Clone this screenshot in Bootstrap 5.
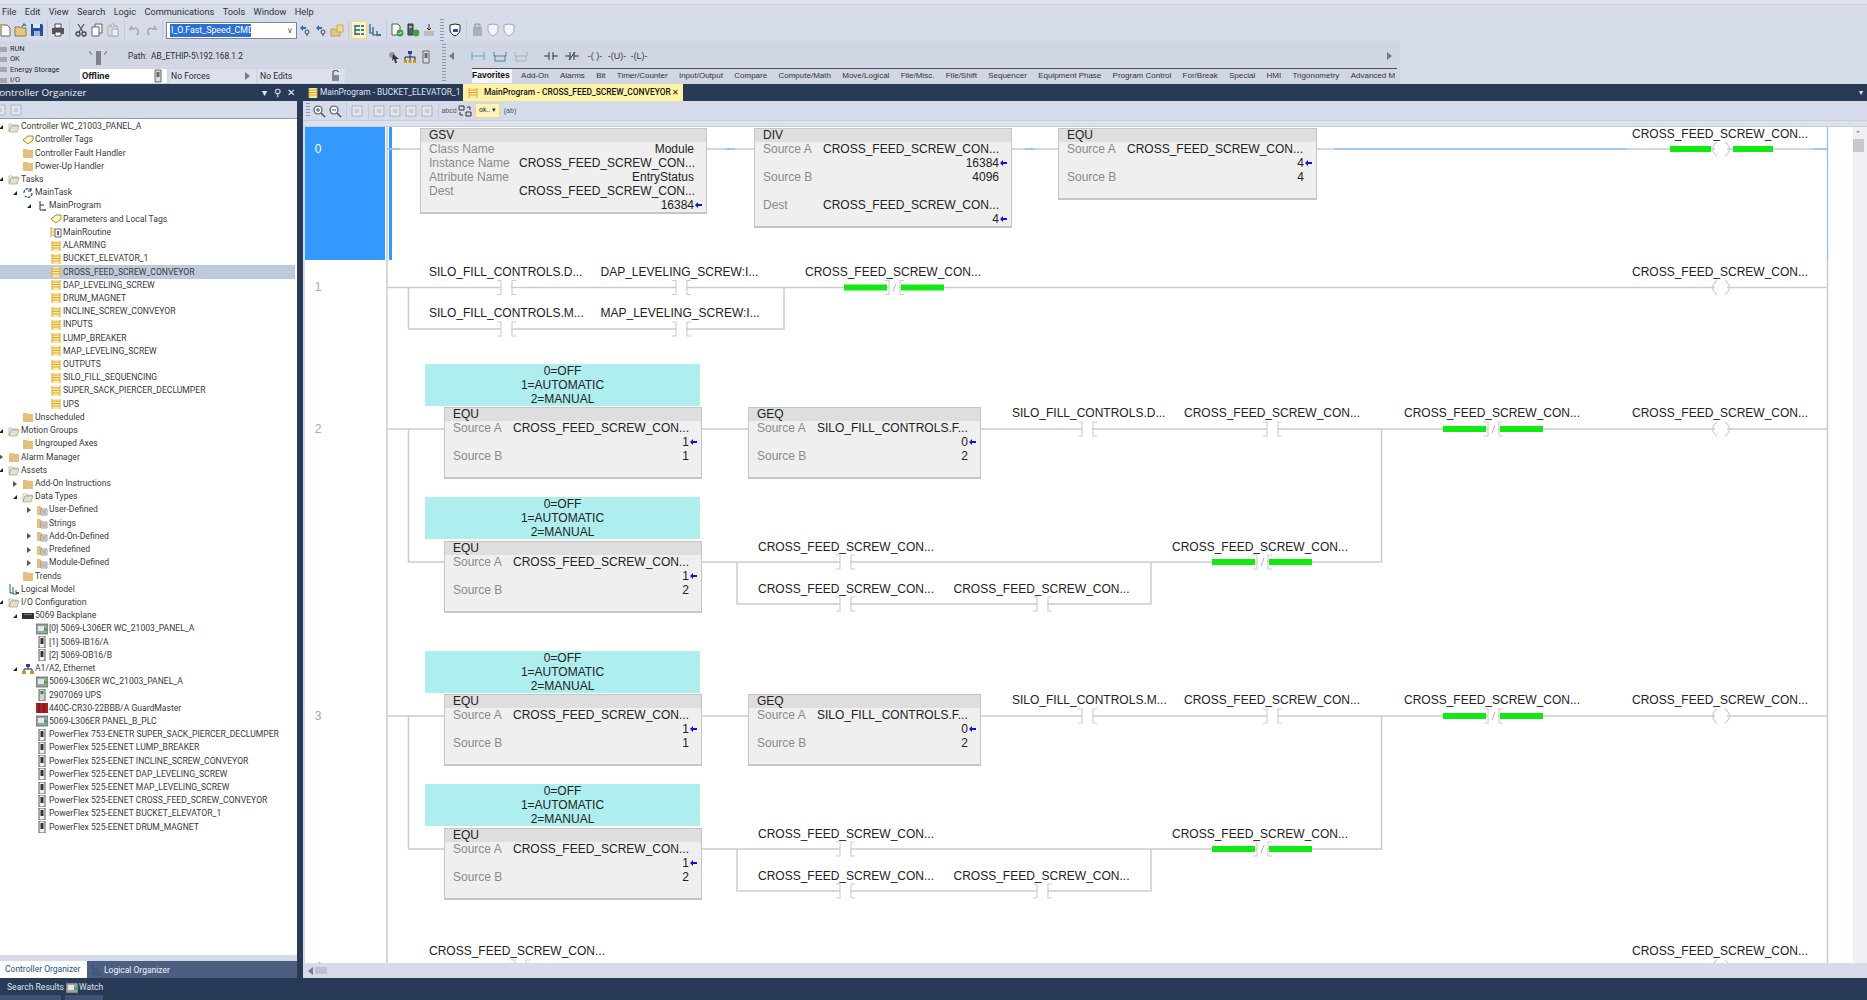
<!DOCTYPE html>
<html lang="en">
<head>
<meta charset="UTF-8">
<title>Logix Designer</title>
<link href="https://cdn.jsdelivr.net/npm/bootstrap@5.3.0/dist/css/bootstrap.min.css" rel="stylesheet">
<style>
  html, body { height: 100%; }
  body { background: #d6dbe9; color: #2b2b2b; font: 9px/1.2 Roboto, sans-serif; overflow: hidden; width: 1867px; height: 1000px; }
  svg.ic { width: 14px; height: 14px; display: block; flex: none; }

  /* top of the window */
  .menu-strip { height: 19px; padding-top: 4px; padding-left: 2px; gap: 8.4px; background: linear-gradient(#dfe3ee 4px, #c9cfdf 4px, #c9cfdf 5px, #d6dbe9 5px); font-size: 9.2px; color: #333; line-height: 15px; }
  .tool-strip { height: 22px; padding-left: 0; margin-left: -3px; }
  .tb { width: 16px; height: 18px; display: flex; align-items: center; justify-content: center; flex: none; }
  .tb.on { background: #fdf3c0; outline: 1px solid #ecd98a; outline-offset: -1px; }
  .tsep { flex: none; display: flex; justify-content: center; align-self: stretch; margin: 2px 0; }
  .tsep::after { content: ""; width: 1px; background: #c3c9da; }
  .w5 { width: 5px; } .w6 { width: 6px; } .w7 { width: 7px; }
  .grip { flex: none; width: 4px; align-self: stretch; background: repeating-linear-gradient(#8e95a8 0 1px, transparent 1px 3px); margin: 0 3px; }
  .combo { width: 131px; height: 17px; background: #fff; border: 1px solid #7d8496; flex: none; padding: 1px 3px; font-size: 8.8px; line-height: 13px; color: #fff; }
  .combo b { font-weight: 400; background: #2c6fd6; padding: 0 1px; display: inline-block; width: 81px; white-space: nowrap; }
  .combo i { font-style: normal; color: #555; font-size: 8px; }

  .status-strip { height: 43px; }
  .status-left { width: 442px; flex: none; background: #d1d6e5; }
  .lamps { width: 80px; flex: none; padding-top: 3px; font-size: 7.4px; }
  .lamp-row { height: 10.4px; line-height: 10.4px; gap: 3px; white-space: nowrap; }
  .lamp-row::before { content: ""; width: 7px; height: 5px; background: #a2a6b0; flex: none; }
  .lamp-top { height: 28px; padding-top: 3px; }
  .keysw { width: 20px; height: 14px; margin: 3px 20px 0 8px; flex: none; position: relative; }
  .keysw span { display: block; width: 5px; height: 14px; background: #7f8288; margin: 0 auto; }
  .keysw::before, .keysw::after { content: ""; position: absolute; top: 0; width: 1px; height: 4px; background: #777; }
  .keysw::before { left: 2px; transform: rotate(-35deg); }
  .keysw::after { right: 2px; transform: rotate(35deg); }
  .path-txt { font-size: 8.3px; flex: 1; }
  .mode-box { width: 87px; height: 14px; margin-right: 2px; padding: 0 2px; line-height: 14px; background: #dce0ec; font-size: 8.6px; flex: none; }
  .mode-box.now { background: #fff; font-size: 9.2px; font-weight: 700; color: #222; }
  .ladder-tools { width: 958px; flex: none; background: #d1d6e5; }
  .ladder-top { height: 27px; padding-top: 3px; }
  .ladder-tools .grip { margin: 0 3px 0 0; }
  .lt { color: #3c3c3c; font: 9px "Liberation Sans", sans-serif; width: 22px; text-align: center; flex: none; }
  .ladder-tabs { height: 15px; gap: 11.3px; border-top: 1px solid #4a4f5c; margin-left: 23px; margin-right: 3px; font: 8px/13px "Liberation Sans", sans-serif; color: #333; white-space: nowrap; overflow: hidden; }
  .ladder-tabs .now { background: #f3f4f8; font-size: 8.5px; font-weight: 700; color: #111; padding: 0 2px; margin: -1px -2px 0; line-height: 15px; }
  .nav-arrow { width: 0; height: 0; border: 4px solid transparent; flex: none; }
  .nav-l { border-right: 5px solid #767b88; border-left: 0; }
  .nav-r { border-left: 5px solid #767b88; border-right: 0; }

  /* organizer on the left */
  .work { height: 894px; }
  .organizer { width: 297px; flex: none; }
  .pane-head { height: 17px; background: #293a56; color: #eef1f6; font: 9.8px/17px "Open Sans", sans-serif; white-space: nowrap; overflow: hidden; }
  .pane-tools { height: 18px; background: #d6dbe9; border-bottom: 1px solid #8f96a8; }
  .org-tree { flex: 1; background: #fff; overflow: hidden; padding-top: 1px; }
  .tree-row { height: 13.23px; line-height: 13px; white-space: nowrap; color: #3a3a3a; font-size: 8.6px; }
  .tree-row.sel { background: #bccadb; margin-right: 2px; }
  .lv0 { padding-left: 0; } .lv1 { padding-left: 14px; } .lv2 { padding-left: 28px; } .lv3 { padding-left: 42px; }
  .twist { width: 8px; margin-left: -3px; flex: none; display: flex; justify-content: center; margin-right: 3px; }
  .twist.open::after { content: ""; border: 2.5px solid transparent; border-right-color: #222; border-bottom-color: #222; }
  .twist.shut::after { content: ""; border: 3px solid transparent; border-left: 4px solid #555; border-right: 0; }
  .tree-ic { width: 12px; height: 12px; margin-right: 1px; flex: none; }
  .pane-foot { height: 6px; background: #d6dbe9; }
  .org-tabs { height: 17px; background: #4c5f80; color: #eef1f6; line-height: 16px; font-size: 8.5px; white-space: nowrap; }
  .org-tab-now { width: 87px; background: #fff; color: #24527e; padding-left: 5px; }

  .splitter { width: 6px; background: #293a56; flex: none; }

  /* document area */
  .doc { flex: 1; min-width: 0; }
  .doc-tabs { height: 17px; background: #293a56; color: #dfe4ee; font-size: 8.4px; line-height: 17px; white-space: nowrap; }
  .doc-tab { padding-left: 4px; width: 155px; }
  .doc-tab-now { width: 220px; background: #fdf3a5; color: #111; font-weight: 500; padding: 0 4px; margin-left: 5px; }
  .doc-tools { height: 19px; padding-left: 2px; background: #d6dbe9; }
  .doc-tools .grip { margin: 2px 1px 2px 1px; }
  .mini-sel { width: 25px; height: 15px; background: #fdf3c0; outline: 1px solid #ecd98a; outline-offset: -1px; font-size: 7px; line-height: 15px; text-align: center; margin: 0 2px; flex: none; }
  .mini-txt { font: 7px "Liberation Sans", sans-serif; color: #555; flex: none; width: 16px; text-align: center; }
  .doc-gap { height: 7px; border-top: 1px solid #c8cddc; border-bottom: 1px solid #c8cddc; background: #dde1ec; }
  .rung-view { position: relative; flex: 1; background: #fff; overflow: hidden; margin-left: 2px; font: 12px/14px "Liberation Sans", sans-serif; color: #222; }
  .wires { position: absolute; left: 0; top: 0; width: 1562px; height: 836px; }
  .tag-txt, .rung-no, .fb, .rem { position: absolute; }
  .tag-txt { white-space: nowrap; }
  .rung-no { width: 20px; text-align: center; color: #a9a9a9; }
  .rung-no.now { color: #fff; }
  .rung-sel { position: absolute; left: 0; top: 0; width: 80px; height: 133px; background: #3399ff; }
  .fb { background: #efefef; border: 1px solid #c6c6c6; border-bottom-width: 2px; }
  .fb-head { height: 13px; background: #dedede; padding-left: 8px; line-height: 13px; }
  .fb-row { height: 14px; padding-left: 8px; white-space: nowrap; }
  .fb-lab { color: #8b8b8b; flex: none; }
  .fb-num { flex: 1; text-align: right; }
  .fb-arr { width: 12px; flex: none; display: flex; align-items: center; padding-left: 1px; }
  .rem { width: 275px; height: 42px; background: #afeeee; text-align: center; }
  .v-scroll { position: absolute; right: 0; top: 0; bottom: 0; width: 14px; background: #eef0f4; }
  .v-thumb { position: absolute; left: 0; top: 12px; width: 11px; height: 13px; background: #c8c8c8; }
  .v-up { position: absolute; left: 2px; top: 3px; width: 7px; height: 7px; color: #444; font-size: 7px; line-height: 7px; }
  .h-scroll { height: 15px; background: #d6dbe9; padding-left: 5px; gap: 2px; }
  .h-thumb { width: 12px; height: 7px; background: #bcc2d1; }

  .foot-bar { height: 22px; background: #293a56; color: #dfe4ee; font-size: 8.6px; line-height: 18px; white-space: nowrap; position: relative; }
  .foot-tab { height: 22px; border-bottom: 5px solid #3f5374; flex: none; }
</style>
</head>
<body>
<svg width="0" height="0" class="position-absolute">
  <symbol id="i-new" viewBox="0 0 14 14"><path d="M3 2h6l3 3v8H3z" fill="#fff" stroke="#666"/><path d="M2 1l2 2M1 4h3" stroke="#e1a72e" stroke-width="1.5"/></symbol>
  <symbol id="i-open" viewBox="0 0 14 14"><path d="M1 4h5l1 1h5v8H1z" fill="#e8c67d" stroke="#8a7a50"/><path d="M8 4l2-3 2 2" fill="none" stroke="#2c6fb5" stroke-width="1.3"/></symbol>
  <symbol id="i-save" viewBox="0 0 14 14"><path d="M1 1h11l1 1v11H1z" fill="#23509e"/><path d="M3 1h7v4H3z" fill="#dfe7f5"/><path d="M4 8h6v5H4z" fill="#9db5da"/></symbol>
  <symbol id="i-print" viewBox="0 0 14 14"><path d="M4 1h6v4H4z" fill="#fff" stroke="#444"/><path d="M1 5h12v6H1z" fill="#555"/><path d="M4 9h6v4H4z" fill="#fff" stroke="#444"/></symbol>
  <symbol id="i-cut" viewBox="0 0 14 14"><path d="M4 1l5 8M10 1L5 9" stroke="#555" stroke-width="1.2"/><circle cx="4" cy="11" r="2" fill="none" stroke="#444" stroke-width="1.3"/><circle cx="10" cy="11" r="2" fill="none" stroke="#444" stroke-width="1.3"/></symbol>
  <symbol id="i-copy" viewBox="0 0 14 14"><path d="M5 1h7v9H5z" fill="#eee" stroke="#666"/><path d="M2 4h7v9H2z" fill="#fff" stroke="#666"/></symbol>
  <symbol id="i-paste" viewBox="0 0 14 14"><path d="M2 3h9v10H2z" fill="none" stroke="#aaa"/><path d="M5 1h3v3H5zM6 6h6v7H6z" fill="#eee" stroke="#aaa"/></symbol>
  <symbol id="i-undo" viewBox="0 0 14 14"><path d="M4 3l-2 3h3c4-2 7 1 4 6" fill="none" stroke="#a5a5a5" stroke-width="1.5"/></symbol>
  <symbol id="i-redo" viewBox="0 0 14 14"><path d="M10 3l2 3H9C5 4 2 7 5 12" fill="none" stroke="#a5a5a5" stroke-width="1.5"/></symbol>
  <symbol id="i-find" viewBox="0 0 14 14"><path d="M2 5l3-3v2h3v2H5v2z" fill="#2c6fb5"/><circle cx="9" cy="9" r="2" fill="none" stroke="#444"/><path d="M9 11v2" stroke="#444"/></symbol>
  <symbol id="i-findf" viewBox="0 0 14 14"><path d="M1 6h4l1 1h4v6H1z" fill="#e8c67d" stroke="#b9a267"/><path d="M7 2h6v7H7z" fill="#f5d98d" stroke="#c5a85a"/></symbol>
  <symbol id="i-tree" viewBox="0 0 14 14"><path d="M3 2v10M3 3h5M3 7h5M3 11h5" stroke="#1b5a8a" stroke-width="1.3" fill="none"/><path d="M9 2h3v2H9zM9 6h3v2H9zM9 10h3v2H9z" fill="#2a8a9a"/></symbol>
  <symbol id="i-logic" viewBox="0 0 14 14"><path d="M2 1v9l3 0M5 4v8h4M9 8v4h3" stroke="#235a82" fill="none" stroke-width="1.2"/><path d="M8 11h5v2H8z" fill="#3a8a4a"/></symbol>
  <symbol id="i-verify" viewBox="0 0 14 14"><path d="M2 1h6l2 2v9H2z" fill="#fff" stroke="#555"/><circle cx="10" cy="10" r="3.4" fill="#3da33d"/><path d="M8.5 10l1 1 2-2" stroke="#fff" fill="none"/></symbol>
  <symbol id="i-verify2" viewBox="0 0 14 14"><path d="M2 1h5v11H2z" fill="#55606a" stroke="#333"/><path d="M3 3h3v2H3z" fill="#7c7"/><circle cx="10" cy="10" r="3.4" fill="#3da33d"/></symbol>
  <symbol id="i-down" viewBox="0 0 14 14"><path d="M7 1v6M5 5l2 2 2-2" stroke="#333" fill="none"/><path d="M2 8h10v5H2z" fill="#9b9b9b"/><path d="M3 8v5M5 8v5M7 8v5M9 8v5M11 8v5" stroke="#ddd"/></symbol>
  <symbol id="i-shield" viewBox="0 0 14 14"><path d="M2 2l5-1 5 1v5c0 3-3 5-5 6-2-1-5-3-5-6z" fill="#fff" stroke="#223"/><path d="M5 6h5v3H5z" fill="#24509e"/></symbol>
  <symbol id="i-shield2" viewBox="0 0 14 14"><path d="M2 2l5-1 5 1v5c0 3-3 5-5 6-2-1-5-3-5-6z" fill="#f3f4f7" stroke="#a5a8b0"/></symbol>
  <symbol id="i-drum" viewBox="0 0 14 14"><path d="M3 4h9v9H3z" fill="#aeb1b9"/><path d="M5 1h5v4H5z" fill="#c8cad0" stroke="#999"/></symbol>
  <symbol id="i-cursor" viewBox="0 0 14 14"><circle cx="5" cy="5" r="3" fill="#999"/><path d="M6 4l6 5-3 0 1 4-2 0-1-4-2 2z" fill="#333"/></symbol>
  <symbol id="i-net" viewBox="0 0 14 14"><path d="M5 1h4v3H5z" fill="#2a41a6"/><path d="M7 4v3M2 10V7h10v3M7 7v3" stroke="#222" fill="none"/><path d="M1 10h3v3H1zM5.500 10h3v3h-3zM10 10h3v3h-3z" fill="#c89a1c"/></symbol>
  <symbol id="i-mod" viewBox="0 0 14 14"><path d="M4 1h6v12H4z" fill="#dcdcdc" stroke="#666"/><path d="M5.500 3h3v5h-3z" fill="#666"/></symbol>
  <symbol id="i-lock" viewBox="0 0 14 14"><path d="M4 6V3c0-2 5-2 5 0" fill="none" stroke="#555" stroke-width="1.2"/><path d="M3 6h7v6H3z" fill="#888"/></symbol>
  <symbol id="i-h1" viewBox="0 0 14 14"><path d="M1 3v8M13 3v8M1 7h12" stroke="#55abd0" fill="none"/></symbol>
  <symbol id="i-h2" viewBox="0 0 14 14"><path d="M1 3v4h12V3M2 7v5h10V7" stroke="#4d7f96" fill="none"/></symbol>
  <symbol id="i-h3" viewBox="0 0 14 14"><path d="M1 3v4h12V3M2 7v5h10V7" stroke="#aab0bc" fill="none"/></symbol>
  <symbol id="i-xic" viewBox="0 0 14 14"><path d="M0 7h5M5 3v8M9 3v8M9 7h5" stroke="#333" fill="none"/></symbol>
  <symbol id="i-xio" viewBox="0 0 14 14"><path d="M0 7h5M5 3v8M9 3v8M9 7h5M4 11l6-8" stroke="#333" fill="none"/></symbol>
  <symbol id="i-zin" viewBox="0 0 14 14"><circle cx="6" cy="6" r="4" fill="#fff" stroke="#555" stroke-width="1.2"/><path d="M4 6h4M6 4v4" stroke="#23509e"/><path d="M9 9l4 4" stroke="#555" stroke-width="1.6"/></symbol>
  <symbol id="i-zout" viewBox="0 0 14 14"><circle cx="6" cy="6" r="4" fill="#fff" stroke="#555" stroke-width="1.2"/><path d="M4 6h4" stroke="#23509e"/><path d="M9 9l4 4" stroke="#555" stroke-width="1.6"/></symbol>
  <symbol id="i-faint" viewBox="0 0 14 14"><path d="M2 2h10v10H2z" fill="#e4e6ee" stroke="#b0b4c0"/><path d="M5 5h4v4H5z" fill="#c8ccd6"/></symbol>
  <symbol id="i-swap" viewBox="0 0 14 14"><path d="M1 2h5v4H1z" fill="none" stroke="#333"/><path d="M8 8h5v4H8zM9 3h3v3M5 11H2V8" fill="none" stroke="#333"/></symbol>

  <symbol id="t-folder" viewBox="0 0 12 12"><path d="M1 2h4l1 1h5v8H1z" fill="#e3c07c"/></symbol>
  <symbol id="t-open" viewBox="0 0 12 12"><path d="M1 3h3l1 1h5v1H3L1 10z" fill="#fff" stroke="#a9a08a" stroke-width=".7"/><path d="M3 5h8l-2 6H1z" fill="#e6dfcd" stroke="#a9a08a" stroke-width=".7"/></symbol>
  <symbol id="t-tag" viewBox="0 0 12 12"><path d="M1 6l5-4h5v4l-5 4z" fill="#fff6c9" stroke="#a28a2f"/></symbol>
  <symbol id="t-ladder" viewBox="0 0 12 12"><path d="M2 1h8v10H2z" fill="#fde9a6"/><path d="M2 1v10M10 1v10M2 3h8M2 5.500h8M2 8h8" stroke="#deaa35" fill="none"/></symbol>
  <symbol id="t-main" viewBox="0 0 12 12"><path d="M1 1v10M1 3h4M1 6h4M1 9h4" stroke="#deaa35" fill="none"/><path d="M5 3h6v8H5z" fill="#fff" stroke="#666"/><path d="M7 5h2v4H7z" fill="#567"/></symbol>
  <symbol id="t-task" viewBox="0 0 12 12"><path d="M2 6a4 4 0 0 1 7-3M10 6a4 4 0 0 1-7 3" fill="none" stroke="#1f5aa0" stroke-width="1.300" stroke-dasharray="3 1"/><path d="M9 1v3H6" fill="none" stroke="#2c2c2c"/></symbol>
  <symbol id="t-prog" viewBox="0 0 12 12"><path d="M4 1v9h4M4 5h4" stroke="#333" fill="none"/><path d="M7 9h3v2H7z" fill="#3a9a4a"/></symbol>
  <symbol id="t-type" viewBox="0 0 12 12"><path d="M1 2h3l1 1h1v8H1z" fill="#e3c07c"/><path d="M5 5h6v6H5z" fill="#f2f2f2" stroke="#777" stroke-width=".7"/><path d="M6 7h4M6 9h4" stroke="#555" stroke-width=".7"/></symbol>
  <symbol id="t-logical" viewBox="0 0 12 12"><path d="M2 1v9h3M5 4v7h4M8 7v3" stroke="#235a82" fill="none"/><path d="M8 9h3v2H8z" fill="#456"/></symbol>
  <symbol id="t-back" viewBox="0 0 12 12"><path d="M0 3h12v6H0z" fill="#333"/><path d="M2 4h8v1H2z" fill="#777"/></symbol>
  <symbol id="t-plc" viewBox="0 0 12 12"><path d="M0 1h12v10H0z" fill="#9aa3a3" stroke="#555" stroke-width=".7"/><path d="M2 3h6v5H2z" fill="#e3e7e7"/><path d="M8 5h3v3H8z" fill="#4aa84a"/></symbol>
  <symbol id="t-mod" viewBox="0 0 12 12"><path d="M3 0h6v12H3z" fill="#f1f1f1" stroke="#333" stroke-width=".8"/><path d="M4.500 2h3v6h-3z" fill="#333"/></symbol>
  <symbol id="t-ups" viewBox="0 0 12 12"><path d="M3 0h6v12H3z" fill="#cfd4cf" stroke="#444" stroke-width=".8"/><path d="M4.500 2h3v3h-3z" fill="#3a8a4a"/></symbol>
  <symbol id="t-guard" viewBox="0 0 12 12"><path d="M0 1h12v10H0z" fill="#c01818"/><path d="M3 1v10M8 1v10" stroke="#333" stroke-width="1.300"/></symbol>
  <symbol id="t-net" viewBox="0 0 12 12"><path d="M4 1h4v3H4z" fill="#2a41a6"/><path d="M6 4v2M2 8V6h8v2" stroke="#222" fill="none"/><path d="M0 8h4v3H0zM8 8h4v3H8z" fill="#c89a1c"/></symbol>
</svg>

<div class="d-flex flex-column" style="height:1000px">
  <div class="menu-strip d-flex"><span>File</span><span>Edit</span><span>View</span><span>Search</span><span>Logic</span><span>Communications</span><span>Tools</span><span>Window</span><span>Help</span></div>

  <div class="tool-strip d-flex align-items-center" id="mainTools"></div>

  <div class="status-strip d-flex">
    <div class="status-left d-flex">
      <div class="lamps">
        <div class="lamp-row d-flex align-items-center">RUN</div>
        <div class="lamp-row d-flex align-items-center">OK</div>
        <div class="lamp-row d-flex align-items-center">Energy Storage</div>
        <div class="lamp-row d-flex align-items-center">I/O</div>
      </div>
      <div class="flex-grow-1 d-flex flex-column">
        <div class="lamp-top d-flex align-items-center">
          <div class="keysw"><span></span></div>
          <div class="path-txt">Path:&nbsp; AB_ETHIP-5\192.168.1.2</div>
          <div class="tb"><svg class="ic"><use href="#i-cursor"/></svg></div>
          <div class="tb"><svg class="ic"><use href="#i-net"/></svg></div>
          <div class="tb me-2"><svg class="ic"><use href="#i-mod"/></svg></div>
        </div>
        <div class="d-flex">
          <div class="mode-box now d-flex justify-content-between align-items-center">Offline<svg class="ic"><use href="#i-mod"/></svg></div>
          <div class="mode-box d-flex justify-content-between align-items-center">No Forces<span class="nav-arrow nav-r me-1"></span></div>
          <div class="mode-box d-flex justify-content-between align-items-center">No Edits<svg class="ic"><use href="#i-lock"/></svg></div>
        </div>
      </div>
    </div>
    <div class="ladder-tools d-flex flex-column position-relative">
      <div class="ladder-top d-flex align-items-center">
        <span class="grip"></span>
        <span class="nav-arrow nav-l"></span>
        <div class="tb" style="margin-left:16px"><svg class="ic"><use href="#i-h1"/></svg></div>
        <div class="tb" style="margin-left:6px"><svg class="ic"><use href="#i-h2"/></svg></div>
        <div class="tb" style="margin-left:5px"><svg class="ic"><use href="#i-h3"/></svg></div>
        <div class="tb" style="margin-left:14px"><svg class="ic"><use href="#i-xic"/></svg></div>
        <div class="tb" style="margin-left:5px"><svg class="ic"><use href="#i-xio"/></svg></div>
        <span class="lt ms-1">-( )-</span><span class="lt">-(U)-</span><span class="lt">-(L)-</span>
        <span class="nav-arrow nav-r ms-auto me-2"></span>
      </div>
      <div class="d-flex align-items-start">
        <span class="grip" style="height:15px"></span>
        <div class="ladder-tabs d-flex flex-grow-1"><span class="now">Favorites</span><span>Add-On</span><span>Alarms</span><span>Bit</span><span>Timer/Counter</span><span>Input/Output</span><span>Compare</span><span>Compute/Math</span><span>Move/Logical</span><span>File/Misc.</span><span>File/Shift</span><span>Sequencer</span><span>Equipment Phase</span><span>Program Control</span><span>For/Break</span><span>Special</span><span>HMI</span><span>Trigonometry</span><span>Advanced M</span></div>
      </div>
    </div>
    <div class="flex-grow-1"></div>
  </div>

  <div class="work d-flex">
    <div class="organizer d-flex flex-column">
      <div class="pane-head d-flex align-items-center">
        <span class="flex-grow-1" style="margin-left:-7px">Controller Organizer</span>
        <span style="margin-right:7px">&#9662;</span><span style="margin-right:6px">&#9906;</span><span style="margin-right:2px">&#10005;</span>
      </div>
      <div class="pane-tools d-flex align-items-center" style="margin-left:-8px"><div class="tb"><svg class="ic"><use href="#i-faint"/></svg></div><div class="tb"><svg class="ic"><use href="#i-faint"/></svg></div></div>
      <div class="org-tree" id="orgTree"></div>
      <div class="pane-foot"></div>
      <div class="org-tabs d-flex">
        <div class="org-tab-now">Controller Organizer</div>
        <div class="d-flex align-items-center ms-1"><svg class="tree-ic"><use href="#t-logical"/></svg>Logical Organizer</div>
      </div>
    </div>
    <div class="splitter"></div>
    <div class="doc d-flex flex-column">
      <div class="doc-tabs d-flex">
        <div class="doc-tab d-flex align-items-center"><svg class="tree-ic"><use href="#t-ladder"/></svg>MainProgram - BUCKET_ELEVATOR_1</div>
        <div class="doc-tab-now d-flex align-items-center"><svg class="tree-ic"><use href="#t-ladder"/></svg><span class="flex-grow-1 ms-1">MainProgram - CROSS_FEED_SCREW_CONVEYOR</span><span>&#10005;</span></div>
        <span class="ms-auto me-1">&#9662;</span>
      </div>
      <div class="doc-tools d-flex align-items-center" id="docTools"></div>
      <div class="doc-gap"></div>
      <div class="rung-view" id="rungs"></div>
      <div class="h-scroll d-flex align-items-center"><span class="nav-arrow nav-l"></span><span class="h-thumb"></span></div>
    </div>
  </div>

  <div class="foot-bar d-flex">
    <div class="foot-tab" style="width:62px;margin-left:-1px;padding-left:8px">Search Results</div>
    <div class="foot-tab d-flex ms-1" style="width:38px;padding-left:1px"><svg class="tree-ic mt-1"><use href="#t-plc"/></svg><span>Watch</span></div>
  </div>
</div>

<script src="https://cdn.jsdelivr.net/npm/bootstrap@5.3.0/dist/js/bootstrap.bundle.min.js"></script>
<script>
  // toolbars: ic:name, s:separator width
  function toolbar(el, items) {
    el.innerHTML = items.map(function (t) {
      if (t[0] === '|') return '<span class="tsep w' + t[1] + '"></span>';
      if (t === 'grip') return '<span class="grip"></span>';
      if (t === 'combo') return '<div class="combo d-flex justify-content-between"><b>I_O.Fast_Speed_CMD</b><i>&#8744;</i></div>';
      if (t === 'sel') return '<div class="mini-sel">ok.. &#9662;</div>';
      if (t[0] === '~') return '<span class="mini-txt">' + t.slice(1) + '</span>';
      var on = t[0] === '*';
      return '<div class="tb' + (on ? ' on' : '') + '"><svg class="ic"><use href="#i-' + t.replace('*', '') + '"/></svg></div>';
    }).join('');
  }
  toolbar(document.getElementById('mainTools'), ['new', 'open', 'save', '|5', 'print', '|7', 'cut', 'copy', 'paste', '|6', 'undo', 'redo', '|7', 'combo',
    'find', 'find', 'findf', '|6', '*tree', 'logic', '|6', 'verify', 'verify2', 'down', 'grip', 'shield', '|6', 'drum', 'shield2', 'shield2']);
  toolbar(document.getElementById('docTools'), ['grip', 'zin', 'zout', '|6', 'faint', '|6', 'faint', 'faint', 'faint', 'faint', '|6', '~abcd', 'swap', 'sel', '~(ab)']);

  // controller organizer tree: level, twist, icon, text
  var routines = ['ALARMING', 'BUCKET_ELEVATOR_1', 'CROSS_FEED_SCREW_CONVEYOR', 'DAP_LEVELING_SCREW', 'DRUM_MAGNET', 'INCLINE_SCREW_CONVEYOR', 'INPUTS', 'LUMP_BREAKER', 'MAP_LEVELING_SCREW', 'OUTPUTS', 'SILO_FILL_SEQUENCING', 'SUPER_SACK_PIERCER_DECLUMPER', 'UPS'];
  var tree = [
    [0, 'open', 'open', 'Controller WC_21003_PANEL_A'],
    [1, '', 'tag', 'Controller Tags'],
    [1, '', 'folder', 'Controller Fault Handler'],
    [1, '', 'folder', 'Power-Up Handler'],
    [0, 'open', 'open', 'Tasks'],
    [1, 'open', 'task', 'MainTask'],
    [2, 'open', 'prog', 'MainProgram'],
    [3, '', 'tag', 'Parameters and Local Tags'],
    [3, '', 'main', 'MainRoutine']
  ].concat(routines.map(function (r) { return [3, '', 'ladder', r]; })).concat([
    [1, '', 'folder', 'Unscheduled'],
    [0, 'open', 'open', 'Motion Groups'],
    [1, '', 'folder', 'Ungrouped Axes'],
    [0, 'shut', 'folder', 'Alarm Manager'],
    [0, 'open', 'open', 'Assets'],
    [1, 'shut', 'folder', 'Add-On Instructions'],
    [1, 'open', 'open', 'Data Types'],
    [2, 'shut', 'type', 'User-Defined'],
    [2, '', 'type', 'Strings'],
    [2, 'shut', 'type', 'Add-On-Defined'],
    [2, 'shut', 'type', 'Predefined'],
    [2, 'shut', 'type', 'Module-Defined'],
    [1, '', 'folder', 'Trends'],
    [0, '', 'logical', 'Logical Model'],
    [0, 'open', 'open', 'I/O Configuration'],
    [1, 'open', 'back', '5069 Backplane'],
    [2, '', 'plc', '[0] 5069-L306ER WC_21003_PANEL_A'],
    [2, '', 'mod', '[1] 5069-IB16/A'],
    [2, '', 'mod', '[2] 5069-OB16/B'],
    [1, 'open', 'net', 'A1/A2, Ethernet'],
    [2, '', 'plc', '5069-L306ER WC_21003_PANEL_A'],
    [2, '', 'ups', '2907069 UPS'],
    [2, '', 'guard', '440C-CR30-22BBB/A GuardMaster'],
    [2, '', 'plc', '5069-L306ER PANEL_B_PLC'],
    [2, '', 'mod', 'PowerFlex 753-ENETR SUPER_SACK_PIERCER_DECLUMPER'],
    [2, '', 'mod', 'PowerFlex 525-EENET LUMP_BREAKER'],
    [2, '', 'mod', 'PowerFlex 525-EENET INCLINE_SCREW_CONVEYOR'],
    [2, '', 'mod', 'PowerFlex 525-EENET DAP_LEVELING_SCREW'],
    [2, '', 'mod', 'PowerFlex 525-EENET MAP_LEVELING_SCREW'],
    [2, '', 'mod', 'PowerFlex 525-EENET CROSS_FEED_SCREW_CONVEYOR'],
    [2, '', 'mod', 'PowerFlex 525-EENET BUCKET_ELEVATOR_1'],
    [2, '', 'mod', 'PowerFlex 525-EENET DRUM_MAGNET']
  ]);
  document.getElementById('orgTree').innerHTML = tree.map(function (t) {
    var sel = t[3] === 'CROSS_FEED_SCREW_CONVEYOR' ? ' sel' : '';
    return '<div class="tree-row d-flex align-items-center lv' + t[0] + sel + '"><span class="twist ' + t[1] + '"></span>' +
      '<svg class="tree-ic"><use href="#t-' + t[2] + '"/></svg><span>' + t[3] + '</span></div>';
  }).join('');

  // ladder: every coordinate below is in window pixels, the view starts at (305,127)
  var OX = 305, OY = 127, view = document.getElementById('rungs'), g = '', html = '';
  var CF = 'CROSS_FEED_SCREW_CON...';
  function wire(d, cls, w) { g += '<path d="' + d + '" fill="none" stroke="' + (cls || '#cbcbcb') + '" stroke-width="' + (w || 1.5) + '"/>'; }
  function tag(x, y, s) { html += '<div class="tag-txt" style="left:' + (x - OX) + 'px;top:' + (y - OY - 7) + 'px">' + s + '</div>'; }
  function xic(cx, y) {
    g += '<rect x="' + (cx - 5) + '" y="' + (y - 2) + '" width="10" height="4" fill="#fff"/>';
    wire('M' + (cx - 9) + ' ' + (y - 7) + 'h4v14h-4M' + (cx + 10) + ' ' + (y - 7) + 'h-4v14h4', '#cdcdcd', 1.1);
  }
  function greenBars(x1, x2, y) { g += '<rect x="' + x1 + '" y="' + (y - 3) + '" width="' + (x2 - x1) + '" height="6" fill="#12e812"/>'; }
  function xio(cx, y) {
    xic(cx, y);
    wire('M' + (cx - 1) + ' ' + (y + 4) + 'l3 -8', '#b5b5b5', 1);
    greenBars(cx - 50, cx - 7, y); greenBars(cx + 7, cx + 50, y);
  }
  function coil(cx, y, live) {
    g += '<rect x="' + (cx - 6) + '" y="' + (y - 2) + '" width="12" height="4" fill="#fff"/>';
    wire('M' + (cx - 4) + ' ' + (y - 7) + 'Q' + (cx - 13) + ' ' + y + ' ' + (cx - 4) + ' ' + (y + 7) + 'M' + (cx + 4) + ' ' + (y - 7) + 'Q' + (cx + 13) + ' ' + y + ' ' + (cx + 4) + ' ' + (y + 7), '#cdcdcd', 1.1);
    if (live) { greenBars(cx - 51, cx - 10, y); greenBars(cx + 12, cx + 52, y); }
  }
  var ARROW = '<svg width="8" height="6" viewBox="0 0 8 6"><path d="M0 3l3-3v2h4v2H3v2z" fill="#1010e0"/></svg>';
  function fb(x, y, w, name, valX, rows) {
    var h = '<div class="fb" style="left:' + (x - OX) + 'px;top:' + (y - OY) + 'px;width:' + w + 'px"><div class="fb-head">' + name + '</div>';
    rows.forEach(function (r) {
      h += '<div class="fb-row d-flex"><span class="fb-lab" style="width:' + valX + 'px">' + r[0] + '</span>';
      h += r[1] ? '<span>' + r[1] + '</span>' : '';
      h += '<span class="fb-num">' + (r[2] || '') + '</span><span class="fb-arr">' + (r[3] ? ARROW : '') + '</span></div>';
    });
    html += h + '</div>';
  }
  function rem(x, y) { html += '<div class="rem" style="left:' + (x - OX) + 'px;top:' + (y - OY) + 'px">0=OFF<br>1=AUTOMATIC<br>2=MANUAL</div>'; }
  function no(n, y) { html += '<div class="rung-no' + (n === 0 ? ' now' : '') + '" style="left:3px;top:' + (y - OY - 7) + 'px">' + n + '</div>'; }

  html += '<div class="rung-sel"></div>';
  // side rails
  wire('M387 127V963M1827.500 127V963');
  g += '<rect x="389" y="127" width="3" height="133" fill="#3399ff"/><rect x="1827" y="127" width="1" height="133" fill="#8cc4ee"/>';

  // rung 0
  no(0, 149);
  wire('M387 149H420M706 149H754M1011 149H1058M1316 149H1827');
  wire('M1334 149H1627M1813 149H1827M387 149H400M725 149H735M1025 149H1035', '#8cc4ee');
  fb(420, 128, 287, 'GSV', 90, [['Class Name', '', 'Module'], ['Instance Name', CF], ['Attribute Name', '', 'EntryStatus'], ['Dest', CF], ['', '', '16384', 1]]);
  fb(754, 128, 258, 'DIV', 60, [['Source A', CF], ['', '', '16384', 1], ['Source B', '', '4096'], ['', ''], ['Dest', CF], ['', '', '4', 1]]);
  fb(1058, 128, 259, 'EQU', 60, [['Source A', CF], ['', '', '4', 1], ['Source B', '', '4'], ['', '']]);
  tag(1632, 134, CF); coil(1721, 149, true);

  // rung 1
  no(1, 287);
  wire('M387 287.500H1827M408.500 287.500V329H784V287.500');
  tag(429, 272, 'SILO_FILL_CONTROLS.D...'); xic(506, 287.5);
  tag(600.5, 272, 'DAP_LEVELING_SCREW:I...'); xic(681, 287.5);
  tag(429, 313, 'SILO_FILL_CONTROLS.M...'); xic(506, 329);
  tag(600.5, 313, 'MAP_LEVELING_SCREW:I...'); xic(681, 329);
  tag(805, 272, CF); xio(894, 287.5);
  tag(1632, 272, CF); coil(1721, 287.5);

  // rungs 2 and 3 have the same shape
  function modeRung(n, d, c1) {
    no(n, 429 + d);
    wire('M387 ' + (429 + d) + 'H1827M408.500 ' + (429 + d) + 'V' + (562 + d) + 'H1381.500V' + (429 + d) + 'M737 ' + (562 + d) + 'V' + (604 + d) + 'H1151V' + (562 + d));
    rem(425, 364 + d);
    fb(444, 407 + d, 258, 'EQU', 60, [['Source A', CF], ['', '', '1', 1], ['Source B', '', '1'], ['', '']]);
    fb(748, 407 + d, 233, 'GEQ', 60, [['Source A', 'SILO_FILL_CONTROLS.F...'], ['', '', '0', 1], ['Source B', '', '2'], ['', '']]);
    tag(1012, 413 + d, c1); xic(1087, 429 + d);
    tag(1184, 413 + d, CF); xic(1272, 429 + d);
    tag(1404, 413 + d, CF); xio(1493, 429 + d);
    tag(1632, 413 + d, CF); coil(1721, 429 + d);
    rem(425, 497 + d);
    fb(444, 541 + d, 258, 'EQU', 60, [['Source A', CF], ['', '', '1', 1], ['Source B', '', '2'], ['', '']]);
    tag(758, 547 + d, CF); xic(845, 562 + d);
    tag(758, 589 + d, CF); xic(845, 604 + d);
    tag(953.5, 589 + d, CF); xic(1042, 604 + d);
    tag(1172, 547 + d, CF); xio(1262, 562 + d);
  }
  modeRung(2, 0, 'SILO_FILL_CONTROLS.D...');
  modeRung(3, 287, 'SILO_FILL_CONTROLS.M...');

  // rung 4, cut off by the bottom of the view
  no(4, 967);
  wire('M387 967H1827');
  tag(429, 951, CF); xic(520, 967);
  tag(1632, 951, CF); coil(1721, 967);

  html += '<div class="v-scroll"><span class="v-up">&#8963;</span><span class="v-thumb"></span></div>';
  view.innerHTML = '<svg class="wires" viewBox="' + OX + ' ' + OY + ' 1562 836">' + g + '</svg>' + html;
</script>
</body>
</html>
